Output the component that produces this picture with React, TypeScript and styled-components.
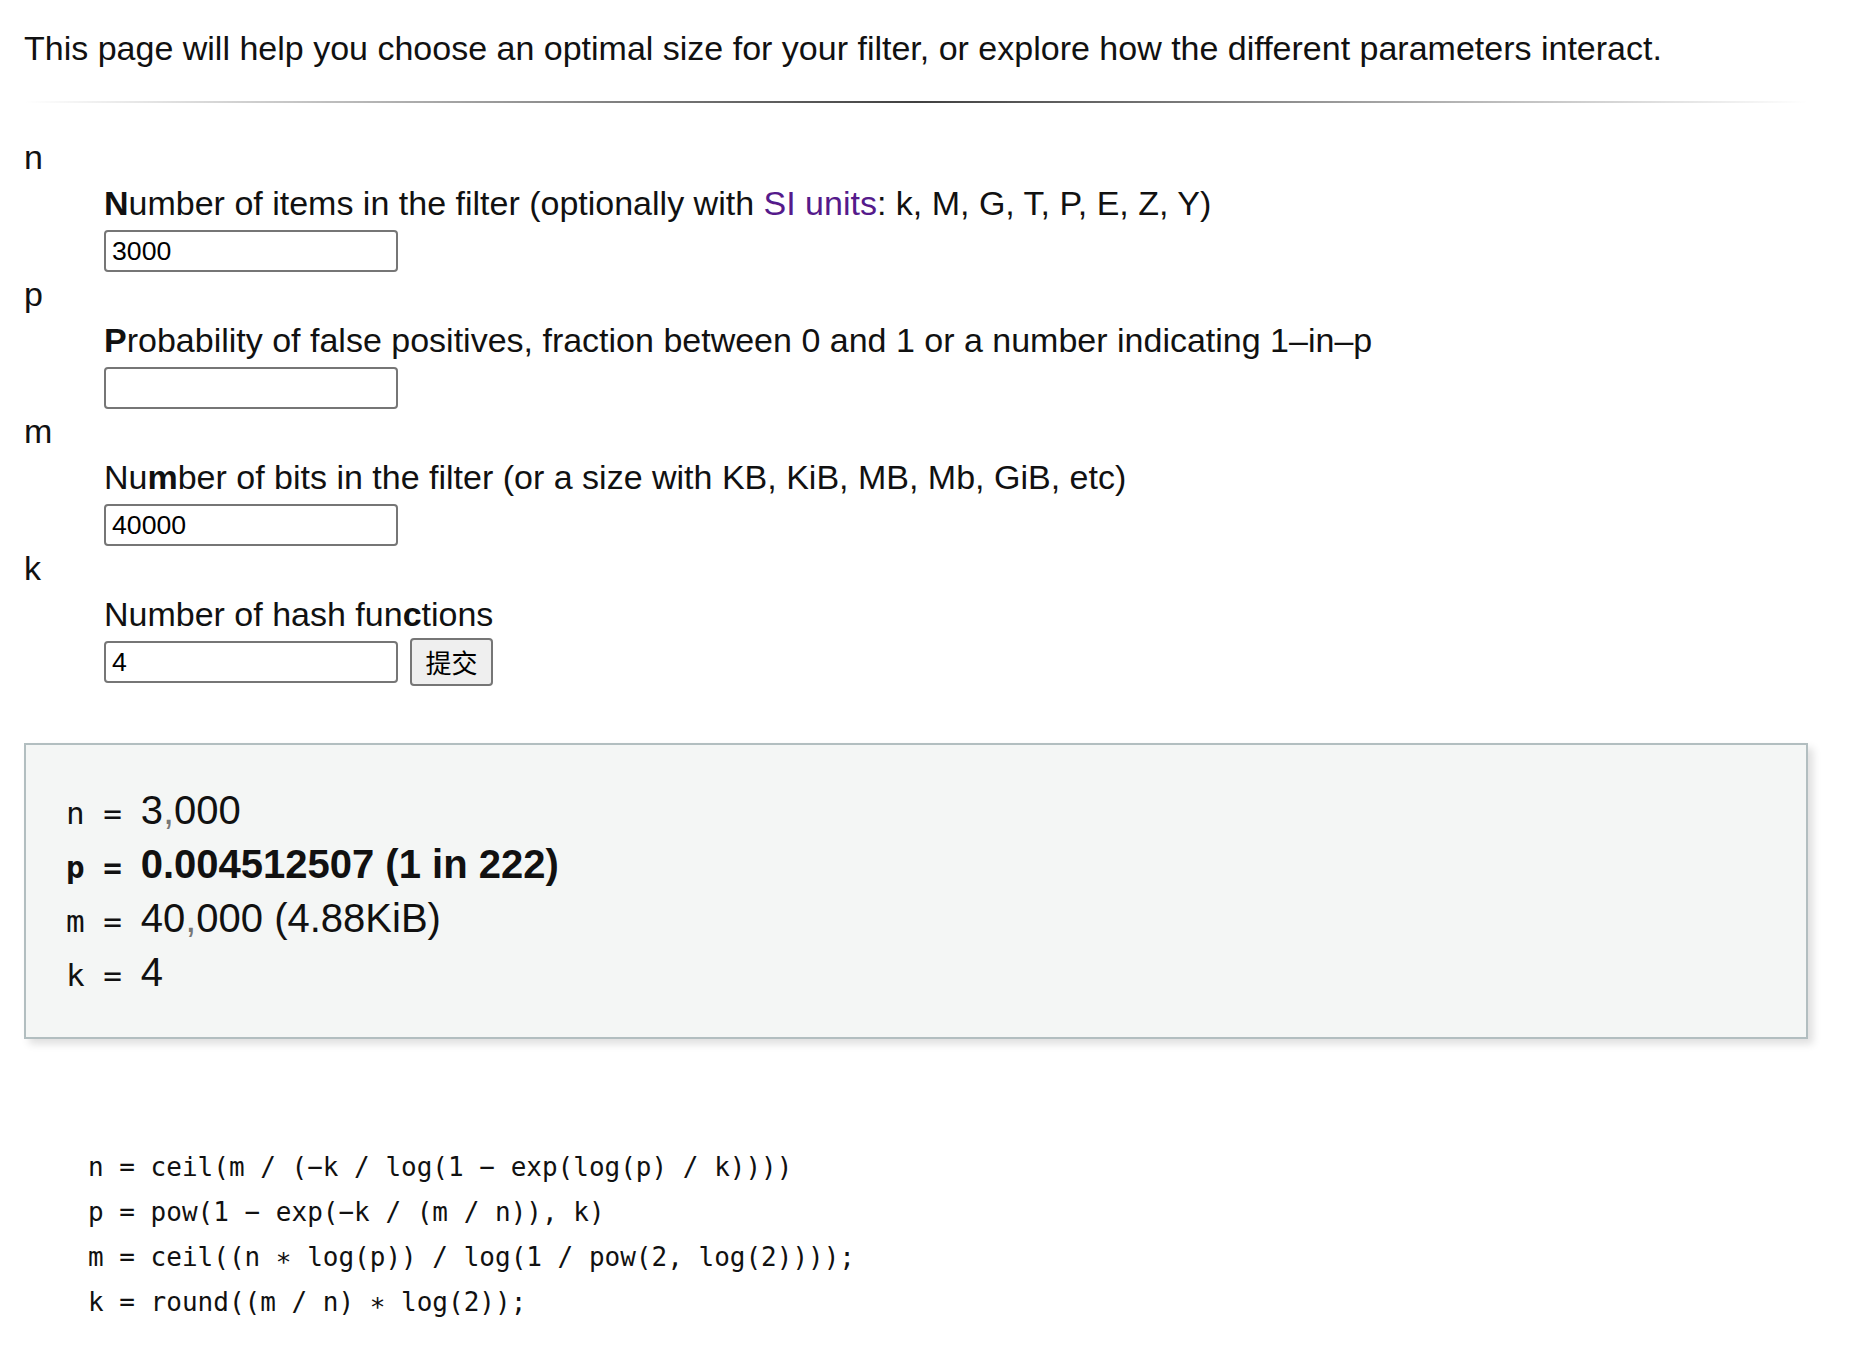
import React from 'react';
import styled, { createGlobalStyle } from 'styled-components';

const GlobalStyle = createGlobalStyle`
  html, body {
    margin: 0;
    padding: 0;
    background: #ffffff;
  }
  body {
    font-family: "Liberation Sans", Arial, Helvetica, sans-serif;
    color: #111111;
  }
`;

const Page = styled.main`
  width: 1784px;
  padding: 28px 64px 60px 24px;
`;

const Intro = styled.p`
  margin: 0;
  font-size: 34px;
  line-height: 40px;
  color: #111;
`;

const Rule = styled.hr`
  margin: 33px 0 0 0;
  height: 2px;
  border: 0;
  background-image: linear-gradient(
    to right,
    rgba(0, 0, 0, 0),
    rgba(0, 0, 0, 0.75),
    rgba(0, 0, 0, 0)
  );
`;

const Params = styled.dl`
  margin: 34px 0 0 0;
`;

const Term = styled.dt`
  font-size: 34px;
  line-height: 40px;
  margin: 0;
`;

const Def = styled.dd`
  margin: 6px 0 2px 80px;
`;

const Label = styled.label`
  display: block;
  font-size: 34px;
  line-height: 40px;
`;

const Key = styled.b`
  font-weight: 700;
`;

const Link = styled.a`
  color: #551a8b;
  text-decoration: none;
`;

const InputRow = styled.div`
  margin-top: 7px;
  height: 42px;
  display: flex;
  align-items: center;
  gap: 12px;
`;

const TextInput = styled.input`
  box-sizing: border-box;
  width: 294px;
  height: 42px;
  border: 2px solid #767676;
  border-radius: 4px;
  padding: 0 6px;
  font-family: "Liberation Sans", Arial, sans-serif;
  font-size: 26.67px;
  color: #000;
  background: #fff;
  outline: none;
`;

const Submit = styled.button`
  box-sizing: border-box;
  width: 83px;
  height: 48px;
  border: 2px solid #767676;
  border-radius: 4px;
  background: #efefef;
  font-family: "Noto Sans CJK SC", "Noto Sans CJK JP", sans-serif;
  font-size: 26px;
  color: #000;
  padding: 0;
  line-height: 1;
`;

const Results = styled.section`
  margin-top: 60px;
  box-sizing: border-box;
  border: 2px solid #b2bec0;
  background: #f4f6f5;
  box-shadow: 5px 5px 8px rgba(0, 0, 0, 0.13);
  padding: 38px 40px;
`;

const ResultLine = styled.div<{ $strong?: boolean }>`
  font-size: 40px;
  line-height: 54px;
  font-weight: ${(p) => (p.$strong ? 700 : 400)};
  color: #111;
  white-space: pre;
`;

const Sym = styled.span`
  font-family: "DejaVu Sans Mono", "Liberation Mono", monospace;
  font-size: 31px;
  line-height: 40px;
`;

const Sep = styled.span`
  color: #777;
`;

const Formulas = styled.pre`
  margin: 106px 0 0 64px;
  font-family: "DejaVu Sans Mono", "Liberation Mono", monospace;
  font-size: 26px;
  line-height: 45px;
  color: #111;
`;

type Field = {
  term: string;
  label: React.ReactNode;
  value: string;
  submit?: boolean;
};

const fields: Field[] = [
  {
    term: 'n',
    label: (
      <>
        <Key>N</Key>umber of items in the filter (optionally with{' '}
        <Link href="#si">SI units</Link>: k, M, G, T, P, E, Z, Y)
      </>
    ),
    value: '3000',
  },
  {
    term: 'p',
    label: (
      <>
        <Key>P</Key>robability of false positives, fraction between 0 and 1 or a
        number indicating 1–in–p
      </>
    ),
    value: '',
  },
  {
    term: 'm',
    label: (
      <>
        Nu<Key>m</Key>ber of bits in the filter (or a size with KB, KiB, MB, Mb,
        GiB, etc)
      </>
    ),
    value: '40000',
  },
  {
    term: 'k',
    label: (
      <>
        Number of hash fun<Key>c</Key>tions
      </>
    ),
    value: '4',
    submit: true,
  },
];

const withSeps = (s: string) => {
  const parts = s.split(',');
  return parts.map((part, i) => (
    <React.Fragment key={i}>
      {i > 0 && <Sep>,</Sep>}
      {part}
    </React.Fragment>
  ));
};

export default function App() {
  return (
    <>
      <GlobalStyle />
      <Page>
        <Intro>
          This page will help you choose an optimal size for your filter, or
          explore how the different parameters interact.
        </Intro>
        <Rule />
        <Params>
          {fields.map((f) => (
            <React.Fragment key={f.term}>
              <Term>{f.term}</Term>
              <Def>
                <Label>{f.label}</Label>
                <InputRow>
                  <TextInput defaultValue={f.value} />
                  {f.submit && <Submit type="button">提交</Submit>}
                </InputRow>
              </Def>
            </React.Fragment>
          ))}
        </Params>
        <Results>
          <ResultLine>
            <Sym>n = </Sym>
            {withSeps('3,000')}
          </ResultLine>
          <ResultLine $strong>
            <Sym>p = </Sym>0.004512507 (1 in 222)
          </ResultLine>
          <ResultLine>
            <Sym>m = </Sym>
            {withSeps('40,000')} (4.88KiB)
          </ResultLine>
          <ResultLine>
            <Sym>k = </Sym>4
          </ResultLine>
        </Results>
        <Formulas>
          {`n = ceil(m / (−k / log(1 − exp(log(p) / k))))
p = pow(1 − exp(−k / (m / n)), k)
m = ceil((n ∗ log(p)) / log(1 / pow(2, log(2))));
k = round((m / n) ∗ log(2));`}
        </Formulas>
      </Page>
    </>
  );
}
